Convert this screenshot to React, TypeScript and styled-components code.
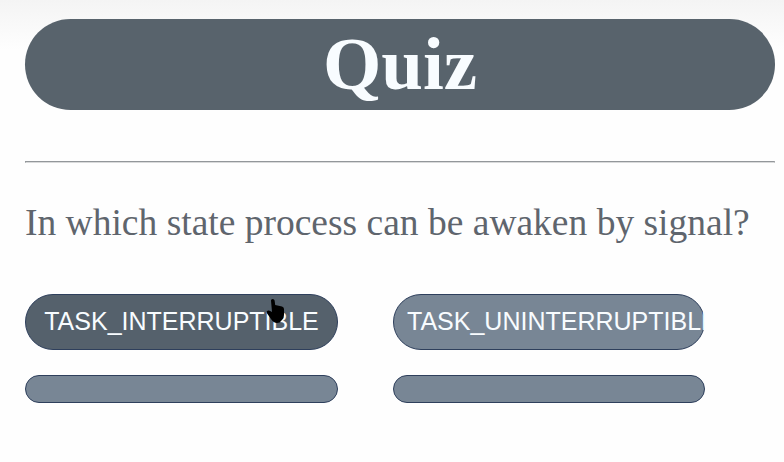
import React from "react";
import styled, { createGlobalStyle } from "styled-components";

const GlobalStyle = createGlobalStyle`
  * { box-sizing: border-box; }
  body { margin: 0; background: #fefefe; overflow: hidden; }
`;

const Page = styled.main`
  height: 462px;
  padding: 19px 9px 0 25px;
  background: linear-gradient(#f4f4f4, #fefefe 50px);
  font-family: "Liberation Serif", "Times New Roman", serif;
`;

const Title = styled.h1`
  margin: 0;
  height: 91px;
  border-radius: 46px;
  background: #58636c;
  color: #f8fcff;
  font-size: 75px;
  line-height: 89px;
  text-align: center;
`;

const Divider = styled.hr`
  margin: 51px 0 0;
  height: 2px;
  border: 1px solid;
  border-color: #93979a #b4b6b8 #d9dadb #93979a;
`;

const Question = styled.p`
  margin: 38px 0 0;
  height: 44px;
  color: #5f656d;
  font-size: 37.5px;
  line-height: 44px;
  white-space: nowrap;
`;

const Answers = styled.div`
  display: grid;
  grid-template-columns: 313px 312px;
  grid-template-rows: 56px 28px;
  gap: 25px 55px;
  width: 680px;
  margin-top: 49px;
  overflow: hidden;
`;

const Answer = styled.button<{ $active?: boolean }>`
  display: block;
  min-width: 0;
  padding: 0 13px 2px;
  border: 1px solid #2e3f5c;
  border-radius: 28px;
  background: ${(p) => (p.$active ? "#55616c" : "#788695")};
  color: #f8fcff;
  font: 25px/52px "Liberation Sans", Arial, sans-serif;
  white-space: nowrap;
  cursor: pointer;
`;

const Pointer = styled.svg`
  position: absolute;
  left: 266px;
  top: 298px;
  width: 19px;
  height: 26px;
`;

export default function App() {
  return (
    <>
      <GlobalStyle />
      <Page>
        <Title>Quiz</Title>
        <Divider />
        <Question>In which state process can be awaken by signal?</Question>
        <Answers>
          <Answer $active>TASK_INTERRUPTIBLE</Answer>
          <Answer>TASK_UNINTERRUPTIBLE</Answer>
          <Answer aria-label="Empty answer" />
          <Answer aria-label="Empty answer" />
        </Answers>
        <Pointer viewBox="0 0 19 26" aria-hidden="true">
          <path
            d="M5 2.5Q5 1 6.7 1Q8.3 1 8.6 2.5L9.2 7L16 8.5Q18 9 18 11V17Q18 20 15.5 22.5Q14 25 11 25Q7.5 25 5 21L.8 15Q0 13 2 12.5Q3.5 12 6 14Z"
            fill="#000"
          />
        </Pointer>
      </Page>
    </>
  );
}
